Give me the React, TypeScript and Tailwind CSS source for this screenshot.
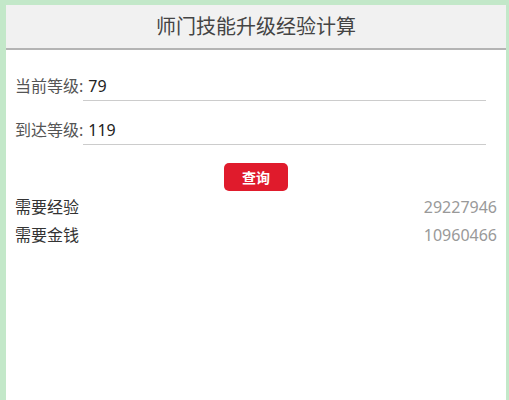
import { useState } from 'react';

const font = { fontFamily: '"Noto Sans", "Noto Sans CJK SC", sans-serif' };

function LevelRow({ label, value, onChange }: { label: string; value: string; onChange: (v: string) => void }) {
  return (
    <div className="flex items-end h-[30px]">
      <span className="text-[16px] leading-[30px] text-[#555] whitespace-nowrap">{label}</span>
      <input
        value={value}
        onChange={(e) => onChange(e.target.value)}
        className="mr-[11px] flex-1 h-[30px] border-b border-[#ccc] px-[5px] text-[16px] text-[#222] outline-none bg-transparent"
        style={font}
      />
    </div>
  );
}

export default function App() {
  const [from, setFrom] = useState('79');
  const [to, setTo] = useState('119');

  return (
    <div className="w-[509px] h-[400px] bg-[#c3e8c9] pt-[5px] pl-[6px] pr-[3px]" style={font}>
      <div className="h-full bg-white flex flex-col">
        {/* Header */}
        <div className="h-[45px] bg-[#f1f1f1] border-b-2 border-[#b4b4b4] flex items-center justify-center">
          <h1 className="text-[20px] text-[#444] font-normal">师门技能升级经验计算</h1>
        </div>

        {/* Form */}
        <div className="pl-[9px] pr-[9px] pt-[21px] flex flex-col gap-[14px]">
          <LevelRow label="当前等级:" value={from} onChange={setFrom} />
          <LevelRow label="到达等级:" value={to} onChange={setTo} />
        </div>

        <div className="flex justify-center mt-[18px]">
          <button className="w-[64px] h-[28px] rounded-[5px] bg-[#e01b2c] text-white text-[14px] font-bold">
            查询
          </button>
        </div>

        {/* Results */}
        <div className="pl-[9px] pr-[9px] mt-[2px] text-[16px] leading-[28px]">
          <div className="flex justify-between">
            <span className="text-[#333]">需要经验</span>
            <span className="text-[#999]">29227946</span>
          </div>
          <div className="flex justify-between">
            <span className="text-[#333]">需要金钱</span>
            <span className="text-[#999]">10960466</span>
          </div>
        </div>
      </div>
    </div>
  );
}
